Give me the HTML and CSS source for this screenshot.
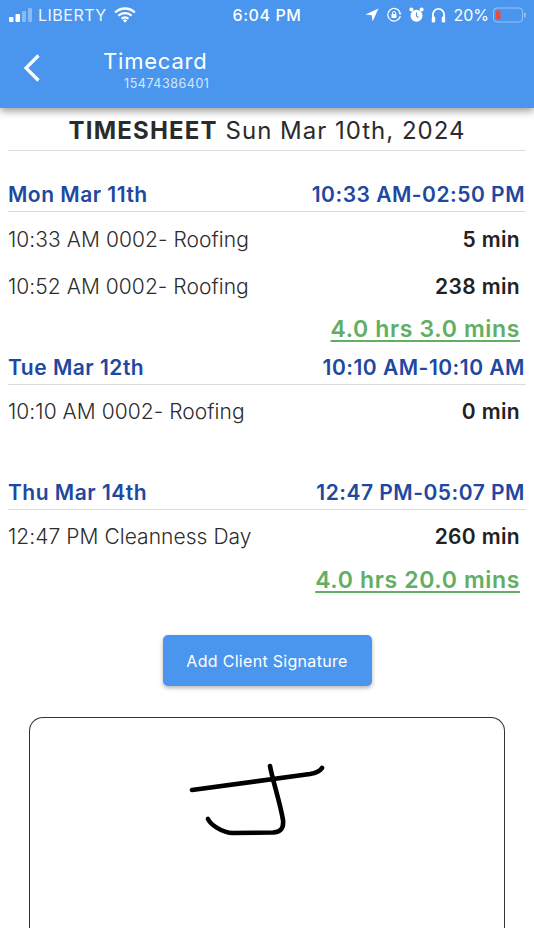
FILE: index.html
```html
<!DOCTYPE html>
<html lang="en">
<head>
<meta charset="utf-8">
<title>Timecard</title>
<link rel="stylesheet" href="styles.css">
</head>
<body>
<div class="page">
  <header class="appbar">
    <div class="status">
      <div class="status-left">
        <svg class="signal" width="24" height="16" viewBox="0 0 24 16"><rect x="0" y="10" width="4.5" height="5" rx="1" fill="#fff"/><rect x="6.5" y="7" width="4.5" height="8" rx="1" fill="#fff"/><rect x="13" y="4" width="4" height="11" rx="1" fill="#fff" fill-opacity=".35"/><rect x="19" y="1" width="4" height="14" rx="1" fill="#fff" fill-opacity=".35"/></svg>
        <span>LIBERTY</span>
        <svg class="wifi" width="22" height="16" viewBox="0 0 22 16"><path d="M1.2 5.5a14 14 0 0 1 19.6 0M4.4 8.8a9.4 9.4 0 0 1 13.2 0M7.6 11.8a4.8 4.8 0 0 1 6.8 0" fill="none" stroke="#fff" stroke-width="2.3"/><path d="M11 15.8l-2.2-2.4a3.2 3.2 0 0 1 4.4 0z" fill="#fff"/></svg>
      </div>
      <div class="status-time">6:04 PM</div>
      <div class="status-right">
        <svg width="14" height="14" viewBox="0 0 14 14"><path d="M13.5.5L.5 6.6l6.2.6.9 6.3z" fill="#fff"/></svg>
        <svg width="16" height="16" viewBox="0 0 16 16"><path d="M14 5.5A6.3 6.3 0 1 0 14.3 9" fill="none" stroke="#fff" stroke-width="1.3"/><path d="M12.2 5.8h3.6l-1.7 2z" fill="#fff"/><rect x="5.5" y="7" width="5" height="4" rx=".6" fill="#fff"/><path d="M6.5 7V6a1.5 1.5 0 0 1 3 0v1" fill="none" stroke="#fff"/></svg>
        <svg width="15" height="16" viewBox="0 0 15 16"><circle cx="7.5" cy="8.7" r="6" fill="#fff"/><path d="M7.5 5.5v3.5l2 1.5" fill="none" stroke="#4a96ee" stroke-width="1.1"/><circle cx="2.4" cy="2.4" r="2" fill="#fff"/><circle cx="12.6" cy="2.4" r="2" fill="#fff"/></svg>
        <svg width="15" height="16" viewBox="0 0 15 16"><path d="M1.9 11V7.5a5.6 5.6 0 0 1 11.2 0V11" fill="none" stroke="#fff" stroke-width="1.8"/><rect x=".8" y="9.5" width="3.4" height="6" rx="1.3" fill="#fff"/><rect x="10.8" y="9.5" width="3.4" height="6" rx="1.3" fill="#fff"/></svg>
        <span class="pct">20%</span>
        <svg class="battery" width="34" height="16" viewBox="0 0 34 16"><rect x=".5" y="1" width="29" height="14" rx="3.5" fill="none" stroke="#fff" stroke-opacity=".45"/><rect x="3" y="3.5" width="4.5" height="9" rx="1" fill="#ec4a3c"/><rect x="31" y="5.5" width="1.6" height="5" rx=".8" fill="#fff" fill-opacity=".45"/></svg>
      </div>
    </div>
    <div class="titlebar">
      <svg class="back" width="18" height="30" viewBox="0 0 18 30"><path d="M15.5 2.5L3 15l12.5 12.5" fill="none" stroke="#fff" stroke-width="3.2"/></svg>
      <div class="titles">
        <div class="title">Timecard</div>
        <div class="subtitle">15474386401</div>
      </div>
    </div>
  </header>

  <main class="content">
    <h1 class="sheet-title"><b>TIMESHEET</b> Sun Mar 10th, 2024</h1>

    <section class="day day-first">
      <div class="day-head"><span>Mon Mar 11th</span><span>10:33 AM-02:50 PM</span></div>
      <div class="row"><span>10:33 AM 0002- Roofing</span><b>5 min</b></div>
      <div class="row"><span>10:52 AM 0002- Roofing</span><b>238 min</b></div>
      <div class="total"><span>4.0 hrs 3.0 mins</span></div>
    </section>

    <section class="day day-second">
      <div class="day-head"><span>Tue Mar 12th</span><span>10:10 AM-10:10 AM</span></div>
      <div class="row"><span>10:10 AM 0002- Roofing</span><b>0 min</b></div>
    </section>

    <section class="day day-third">
      <div class="day-head"><span>Thu Mar 14th</span><span>12:47 PM-05:07 PM</span></div>
      <div class="row"><span>12:47 PM Cleanness Day</span><b>260 min</b></div>
      <div class="total total-last"><span>4.0 hrs 20.0 mins</span></div>
    </section>

    <div class="action"><button class="sign-btn" type="button">Add Client Signature</button></div>

    <div class="sign-box">
      <svg class="signature" width="140" height="76" viewBox="0 0 140 76"><path d="M4 28L122 12C128 11 132 9 134 6M82 4C85 20 92 40 95 58C96 67 92 70 85 70.5L45 71C34 71 22 62 20 57" fill="none" stroke="#000" stroke-width="4.6" stroke-linecap="round" stroke-linejoin="round"/></svg>
    </div>
  </main>
</div>
</body>
</html>
```
FILE: styles.css
```css
* { box-sizing: border-box; }
html, body { margin: 0; padding: 0; background: #fff; }
body { font-family: Inter, "Noto Sans", "Liberation Sans", sans-serif; color: #2b2b2b; }
.page { width: 534px; height: 950px; overflow: hidden; background: #fff; }

.appbar { height: 108px; background: #4a96ee; color: #fff; box-shadow: 0 3px 8px rgba(0,0,0,.4); position: relative; }
.status { height: 30px; display: grid; grid-template-columns: 1fr auto 1fr; align-items: center; font-size: 16px; font-weight: 400; }
.status-left { display: flex; align-items: center; gap: 5px; padding-left: 9px; color: #eef5fe; letter-spacing: .5px; }
.status-left .wifi { margin-left: 2px; }
.status-time { font-weight: 500; letter-spacing: .6px; }
.status-right { display: flex; align-items: center; justify-content: flex-end; gap: 7px; padding-right: 7px; }
.battery { margin-left: -3px; }

.titlebar { display: flex; align-items: center; padding: 16px 0 0 23px; }
.back { margin-top: -2px; }
.titles { margin-left: 62px; }
.title { font-size: 22px; line-height: 30px; letter-spacing: .8px; }
.subtitle { font-size: 12.5px; line-height: 16px; margin-left: 21px; color: #d6e6fb; letter-spacing: .55px; }

.content { padding: 0 8px; }
.sheet-title { margin: 0; height: 43px; border-bottom: 1px solid #dcdcdc; font-size: 24px; font-weight: 400; line-height: 46px; text-align: center; white-space: nowrap; letter-spacing: 1px; }
.sheet-title b { font-weight: 700; letter-spacing: 1.2px; }

.day-first { margin-top: 27px; }
.day-head { height: 34px; margin-bottom: 2px; display: flex; justify-content: space-between; align-items: center; padding: 0 1px 0 0; border-bottom: 1px solid #dcdcdc; color: #2148a0; font-size: 21px; font-weight: 600; white-space: nowrap; letter-spacing: .5px; }
.day-first .day-head { margin-bottom: 3px; }
.row { height: 47px; padding: 2px 6px 0 0; display: flex; justify-content: space-between; align-items: center; font-size: 21px; font-weight: 300; color: #2c2c2c; white-space: nowrap; letter-spacing: .05px; }
.row b { font-weight: 600; color: #222; letter-spacing: .35px; }
.total { height: 40px; display: flex; justify-content: flex-end; align-items: center; padding-right: 6px; color: #62ae62; font-size: 23px; font-weight: 600; white-space: nowrap; letter-spacing: .65px; }
.total span { text-decoration: underline; text-underline-offset: 3px; text-decoration-thickness: 2px; }
.total-last { margin-top: 1px; }
.day-second { margin-top: 2px; }
.day-third { margin-top: 42px; }
.action { display: flex; justify-content: center; margin-top: 35px; }
.sign-btn { width: 209px; height: 51px; border: 0; border-radius: 5px; background: #4a96ee; color: #fff; font: 400 16px Inter, "Noto Sans", sans-serif; letter-spacing: .3px; box-shadow: 0 2px 4px rgba(0,0,0,.3); }
.sign-box { margin: 31px 21px 0; height: 211px; border: 1.5px solid #333; border-bottom: 0; border-radius: 14px 14px 0 0; display: flex; justify-content: center; align-items: flex-start; padding-top: 43.5px; }
.signature { margin-left: -18px; }
```
